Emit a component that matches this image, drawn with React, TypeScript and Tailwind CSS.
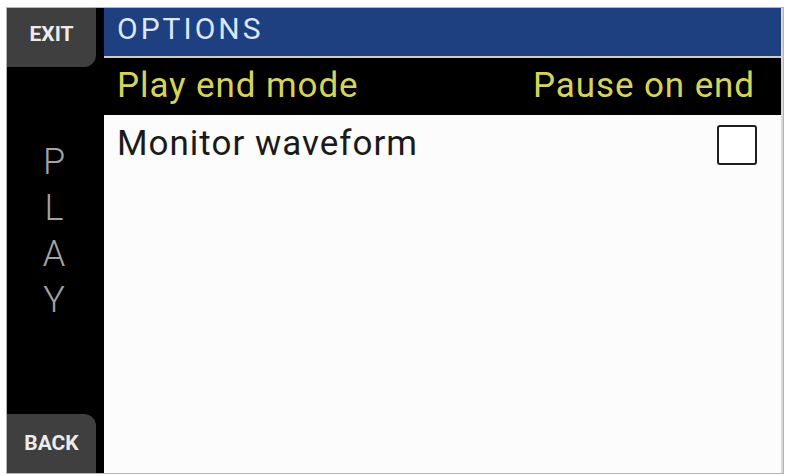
import React from "react";

const font = { fontFamily: "Roboto, 'DejaVu Sans', sans-serif" };

const SideButton = ({ label, top }: { label: string; top?: boolean }) => (
  <div
    className={`mr-[8px] flex h-[59px] items-center justify-center bg-[#3f3f3f] text-[21px] font-bold text-[#ececec] ${
      top ? "rounded-br-[12px] pb-[6px]" : "rounded-tr-[12px]"
    }`}
  >
    {label}
  </div>
);

const App = () => {
  return (
    <div className="h-[476px] w-[787px] bg-white pl-[6px] pt-[7px]" style={font}>
      <div className="flex h-[467px] w-[778px] border border-[#b4b4b4]">
        {/* Left rail */}
        <div className="flex w-[97px] flex-col bg-black">
          <SideButton label="EXIT" top />
          <div className="flex flex-1 flex-col items-center pt-[72px] pr-[3px] text-[36px] font-light leading-[46px] text-[#a3a3a3]">
            <span>P</span>
            <span>L</span>
            <span>A</span>
            <span>Y</span>
          </div>
          <SideButton label="BACK" />
        </div>

        {/* Main panel */}
        <div className="flex flex-1 flex-col border-r-2 border-[#d8d8d8] bg-[#fcfcfc]">
          <div className="h-[48px] bg-[#1e3f80] pl-[13px] text-[30px] leading-[41px] tracking-[3px] text-[#dbe6ff]">
            OPTIONS
          </div>
          <div className="h-[2px] bg-[#c9ccd2]" />
          <div className="flex h-[57px] items-center justify-between bg-black pl-[13px] pr-[26px] text-[35px] tracking-[0.9px] text-[#d6d35c]">
            <span>Play end mode</span>
            <span>Pause on end</span>
          </div>
          <div className="flex items-start justify-between pl-[13px] pr-[24px] pt-[8px] text-[35px] leading-[42px] tracking-[1px] text-[#1a1a1a]">
            <span>Monitor waveform</span>
            <div className="mt-[2px] h-[40px] w-[40px] rounded-[3px] border-[2.5px] border-[#1f1f1f] bg-white" />
          </div>
        </div>
      </div>
    </div>
  );
};

export default App;
